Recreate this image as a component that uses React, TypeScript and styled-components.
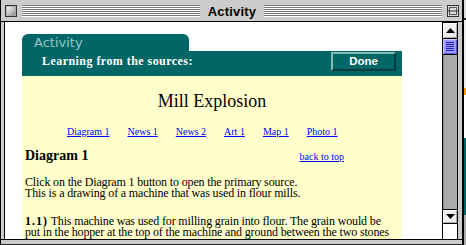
import React from 'react';
import styled, { createGlobalStyle } from 'styled-components';

const Global = createGlobalStyle`
  html, body { margin: 0; padding: 0; }
  body { width: 466px; height: 245px; overflow: hidden; background: #cccccc; }
  #root { width: 466px; height: 245px; }
`;

const SERIF = `"Liberation Serif", "Times New Roman", serif`;
const SANS = `"Liberation Sans", Arial, sans-serif`;

const Screen = styled.div`
  display: flex;
  width: 466px;
  height: 245px;
  overflow: hidden;
`;

const Window = styled.div`
  flex: none;
  width: 463px;
  height: 245px;
  box-sizing: border-box;
  border-left: 1px solid #000;
  border-right: 1px solid #000;
  border-bottom: 1px solid #222;
  background: #cccccc;
  display: flex;
  flex-direction: column;
`;

const Backdrop = styled.div`
  flex: none;
  width: 3px;
  height: 245px;
  border-left: 1px solid #000;
  background: linear-gradient(
    to bottom,
    #dddddd 0px, #dddddd 18px,
    #222222 18px, #222222 20px,
    #eeeeee 20px, #eeeeee 88px,
    #ff9900 88px, #ff9900 95px,
    #ffffff 95px, #ffffff 138px,
    #006666 138px, #006666 215px,
    #aaaaaa 215px
  );
`;

const TitleBar = styled.div`
  flex: none;
  height: 22px;
  box-sizing: border-box;
  border-bottom: 1px solid #000;
  display: flex;
  align-items: flex-start;
  padding: 5px 3px 0 4px;
  background: #cccccc;
`;

const BoxButton = styled.svg`
  flex: none;
  display: block;
  width: 12px;
  height: 12px;
`;

const Stripes = styled.div`
  flex: 1;
  height: 12px;
  margin: 0 5px;
  background: repeating-linear-gradient(
    to bottom,
    #7a7a7a 0px, #7a7a7a 1px,
    #ffffff 1px, #ffffff 2px
  );
`;

const WindowTitle = styled.div`
  flex: none;
  padding: 0 3px;
  font-family: ${SANS};
  font-weight: bold;
  font-size: 13px;
  letter-spacing: 0.2px;
  line-height: 13px;
  color: #000;
`;

const Body = styled.div`
  flex: none;
  height: 217px;
  display: flex;
`;

const SideFrame = styled.div<{ $w: number }>`
  flex: none;
  width: ${(p) => p.$w}px;
  background: #cccccc;
`;

const Content = styled.div`
  flex: none;
  width: 438px;
  box-sizing: border-box;
  border-left: 1px solid #000;
  background: #ffffff;
  padding: 12px 0 0 17px;
  overflow: hidden;
  display: flex;
  flex-direction: column;
`;

const BottomFrame = styled.div`
  flex: none;
  height: 5px;
  box-sizing: border-box;
  border-top: 1px solid #000;
  background: #cccccc;
`;

const ScrollBar = styled.div`
  flex: none;
  width: 16px;
  box-sizing: border-box;
  border-left: 1px solid #000;
  border-right: 1px solid #000;
  background: #ffffff;
  display: flex;
  flex-direction: column;
`;

const ArrowBox = styled.div<{ $h: number }>`
  flex: none;
  height: ${(p) => p.$h}px;
  box-sizing: border-box;
  border-top: 1px solid #000;
  border-bottom: 1px solid #000;
  background: #eeeeee;
  box-shadow: inset 1px 1px 0 #ffffff, inset -1px -1px 0 #aaaaaa;
  display: flex;
  align-items: center;
  justify-content: center;
`;

const Thumb = styled.div`
  flex: none;
  height: 16px;
  box-sizing: border-box;
  border-bottom: 1px solid #000;
  background: #9999ff;
  box-shadow: inset 1px 1px 0 #ccccff, inset -1px -1px 0 #5555cc;
  display: flex;
  align-items: center;
  justify-content: center;
`;

const Grip = styled.div`
  width: 8px;
  height: 9px;
  background: repeating-linear-gradient(
    to bottom,
    #2222aa 0px, #2222aa 1px,
    transparent 1px, transparent 2px
  );
`;

const Track = styled.div`
  flex: 1;
  background: #aaaaaa;
  box-shadow: inset 1px 0 0 #888888;
`;

const ScrollCorner = styled.div`
  flex: none;
  height: 15px;
  background: #ffffff;
`;

const Page = styled.div`
  width: 380px;
  flex: 1;
  display: flex;
  flex-direction: column;
`;

const Tab = styled.div`
  flex: none;
  width: 167px;
  height: 17px;
  box-sizing: border-box;
  border-radius: 6px 6px 0 0;
  background: #006666;
  padding-left: 12px;
  font-family: "DejaVu Sans", Verdana, sans-serif;
  font-size: 13px;
  line-height: 17px;
  color: #99c7c2;
`;

const HeaderBar = styled.div`
  flex: none;
  height: 25px;
  box-sizing: border-box;
  background: #006666;
  display: flex;
  align-items: flex-start;
  justify-content: space-between;
  padding: 1px 6px 0 20px;
`;

const HeaderText = styled.div`
  font-family: ${SERIF};
  font-weight: bold;
  font-size: 12px;
  letter-spacing: 0.45px;
  line-height: 19px;
  color: #ffffff;
`;

const DoneButton = styled.div`
  width: 65px;
  height: 19px;
  box-sizing: border-box;
  border-style: solid;
  border-width: 2px;
  border-color: #86bab2 #0b3a40 #0b3a40 #86bab2;
  background: #006666;
  font-family: ${SANS};
  font-weight: bold;
  font-size: 11.5px;
  line-height: 15px;
  text-align: center;
  color: #ffffff;
`;

const Paper = styled.div`
  flex: 1;
  background: #ffffcc;
  display: flex;
  flex-direction: column;
  padding: 0 3px;
  font-family: ${SERIF};
  color: #000;
`;

const PageTitle = styled.div`
  margin-top: 15px;
  font-size: 18px;
  line-height: 20px;
  text-align: center;
`;

const LinkRow = styled.div`
  margin-top: 15px;
  padding-left: 42px;
  display: flex;
  gap: 18px;
  font-size: 10px;
  line-height: 12px;
`;

const Link = styled.a`
  color: #0000ff;
  text-decoration: underline;
  white-space: nowrap;
`;

const SectionRow = styled.div`
  margin-top: 10px;
  display: flex;
  align-items: baseline;
  justify-content: space-between;
  padding-right: 55px;
`;

const SectionHead = styled.div`
  font-size: 14px;
  font-weight: bold;
  line-height: 16px;
`;

const SmallLink = styled(Link)`
  font-size: 10px;
  line-height: 12px;
`;

const Para = styled.div<{ $gap: number }>`
  margin-top: ${(p) => p.$gap}px;
  font-size: 12px;
  line-height: 11px;
  letter-spacing: -0.15px;
  white-space: nowrap;
`;

const Strong = styled.b`
  letter-spacing: 1px;
`;

const CloseIcon = () => (
  <BoxButton viewBox="0 0 12 12">
    <defs>
      <linearGradient id="cb" x1="0" y1="0" x2="1" y2="1">
        <stop offset="0" stopColor="#ffffff" />
        <stop offset="1" stopColor="#8a8a8a" />
      </linearGradient>
    </defs>
    <rect x="0.5" y="0.5" width="11" height="11" fill="#cccccc" stroke="#333333" />
    <rect x="1.5" y="1.5" width="9" height="9" fill="url(#cb)" stroke="#999999" strokeWidth="0.6" />
  </BoxButton>
);

const ZoomIcon = () => (
  <BoxButton viewBox="0 0 12 12">
    <rect x="0.5" y="0.5" width="11" height="11" fill="#dddddd" stroke="#333333" />
    <rect x="2.5" y="2.5" width="7" height="7" fill="none" stroke="#555555" />
    <line x1="1" y1="6" x2="11" y2="6" stroke="#333333" />
  </BoxButton>
);

const UpArrow = () => (
  <svg width="9" height="5" viewBox="0 0 9 5">
    <polygon points="4.5,0 9,5 0,5" fill="#000" />
  </svg>
);

const DownArrow = () => (
  <svg width="9" height="5" viewBox="0 0 9 5">
    <polygon points="0,0 9,0 4.5,5" fill="#000" />
  </svg>
);

const links = ['Diagram 1', 'News 1', 'News 2', 'Art 1', 'Map 1', 'Photo 1'];

export default function App() {
  return (
    <>
      <Global />
      <Screen>
        <Window>
          <TitleBar>
            <CloseIcon />
            <Stripes />
            <WindowTitle>Activity</WindowTitle>
            <Stripes />
            <ZoomIcon />
          </TitleBar>
          <Body>
            <SideFrame $w={3} />
            <Content>
              <Page>
                <Tab>Activity</Tab>
                <HeaderBar>
                  <HeaderText>Learning from the sources:</HeaderText>
                  <DoneButton>Done</DoneButton>
                </HeaderBar>
                <Paper>
                  <PageTitle>Mill Explosion</PageTitle>
                  <LinkRow>
                    {links.map((l) => (
                      <Link key={l} href="#">{l}</Link>
                    ))}
                  </LinkRow>
                  <SectionRow>
                    <SectionHead>Diagram 1</SectionHead>
                    <SmallLink href="#">back to top</SmallLink>
                  </SectionRow>
                  <Para $gap={13}>
                    Click on the Diagram 1 button to open the primary source.
                    <br />
                    This is a drawing of a machine that was used in flour mills.
                  </Para>
                  <Para $gap={17}>
                    <Strong>1.1)</Strong> This machine was used for milling grain into flour. The grain would be
                    <br />
                    put in the hopper at the top of the machine and ground between the two stones
                  </Para>
                </Paper>
              </Page>
            </Content>
            <ScrollBar>
              <ArrowBox $h={17}>
                <UpArrow />
              </ArrowBox>
              <Thumb>
                <Grip />
              </Thumb>
              <Track />
              <ArrowBox $h={15}>
                <DownArrow />
              </ArrowBox>
              <ScrollCorner />
            </ScrollBar>
            <SideFrame $w={4} />
          </Body>
          <BottomFrame />
        </Window>
        <Backdrop />
      </Screen>
    </>
  );
}
